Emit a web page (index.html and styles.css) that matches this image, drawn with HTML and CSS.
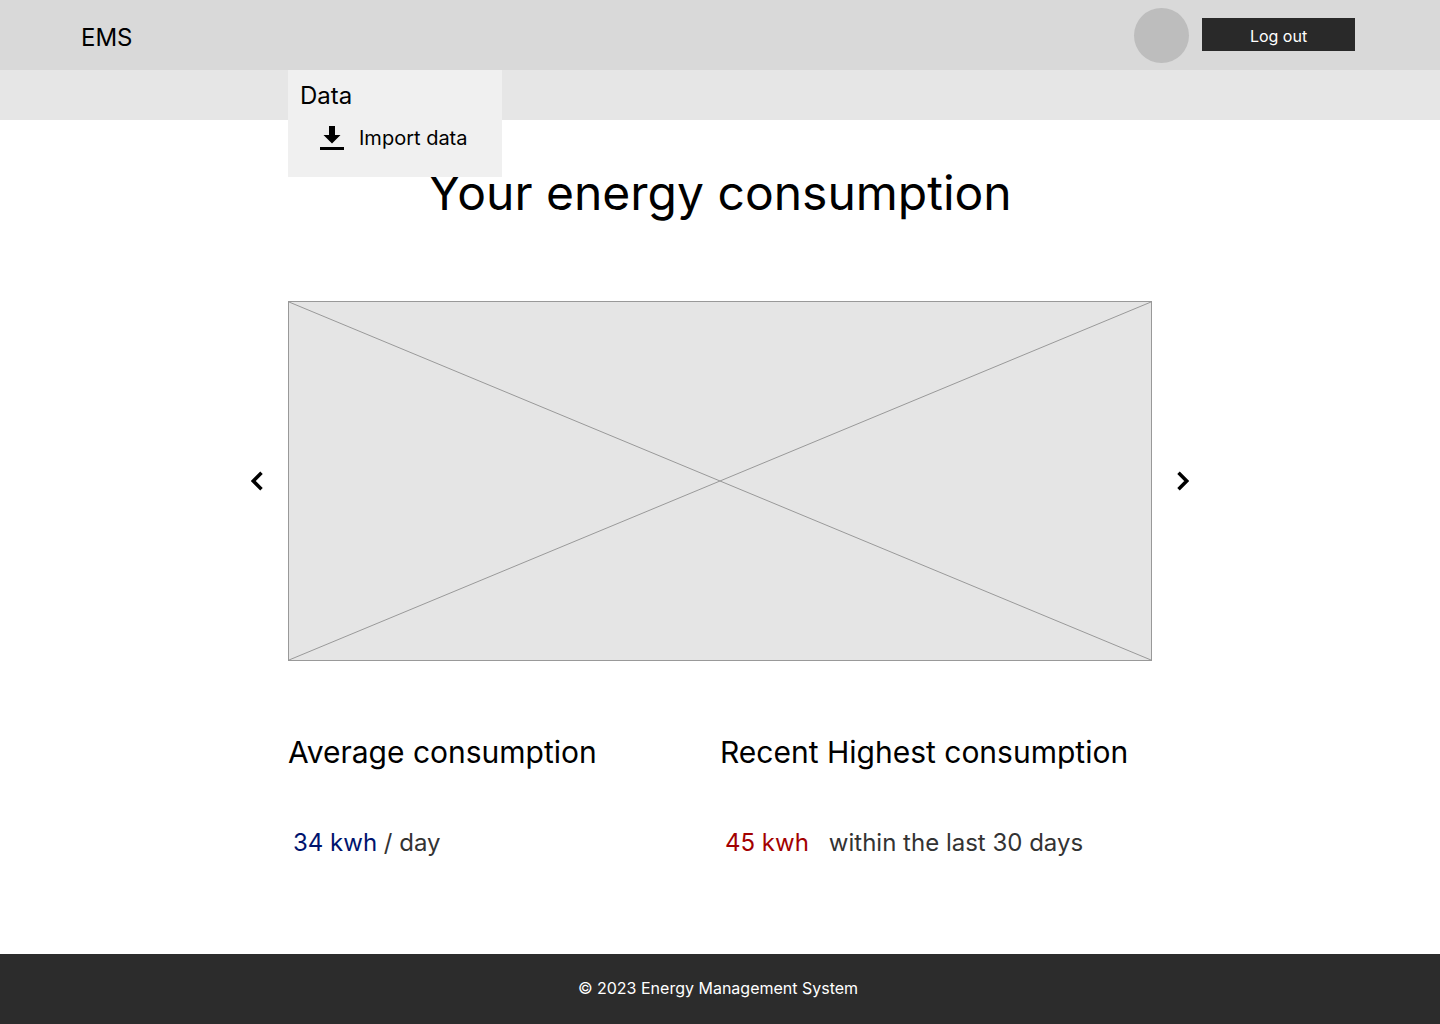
FILE: index.html
```html
<!DOCTYPE html>
<html lang="en">
<head>
  <meta charset="utf-8">
  <meta name="viewport" content="width=device-width, initial-scale=1">
  <title>EMS – Your energy consumption</title>
  <link rel="stylesheet" href="styles.css">
</head>
<body>
  <header class="topbar">
    <a class="brand" href="#">EMS</a>
    <div class="account">
      <span class="avatar"></span>
      <button class="logout" type="button">Log out</button>
    </div>
  </header>
  <nav class="subnav" aria-label="Main">
    <div class="menu">
      <p class="menu-title">Data</p>
      <a class="menu-item" href="#">
        <svg class="menu-icon" viewBox="0 0 24 24" aria-hidden="true"><path d="M9 0h6v9h5.500L12 17.600 3.500 9H9zM0 21h24v3H0z"/></svg>
        Import data
      </a>
    </div>
  </nav>
  <main class="content">
    <h1 class="title">Your energy consumption</h1>
    <section class="carousel" aria-label="Consumption charts">
      <button class="arrow" type="button" aria-label="Previous">
        <svg class="arrow-icon" viewBox="0 0 12 20" aria-hidden="true"><path d="M10.500 1.800 2.300 10l8.200 8.200"/></svg>
      </button>
      <svg class="chart" preserveAspectRatio="none" aria-hidden="true">
        <line x1="0" y1="0" x2="100%" y2="100%"/>
        <line x1="100%" y1="0" x2="0" y2="100%"/>
      </svg>
      <button class="arrow" type="button" aria-label="Next">
        <svg class="arrow-icon" viewBox="0 0 12 20" aria-hidden="true"><path d="M1.500 1.800 9.700 10l-8.200 8.200"/></svg>
      </button>
    </section>
    <div class="stats">
      <section class="stat">
        <h2 class="stat-title">Average consumption</h2>
        <p class="stat-text"><span class="average">34 kwh</span> / day</p>
      </section>
      <section class="stat">
        <h2 class="stat-title">Recent Highest consumption</h2>
        <p class="stat-text"><span class="highest">45 kwh</span>within the last 30 days</p>
      </section>
    </div>
  </main>
  <footer class="footer">© 2023 Energy Management System</footer>
</body>
</html>
```
FILE: styles.css
```css
* { box-sizing: border-box; }

body {
  margin: 0;
  min-height: 100vh;
  display: flex;
  flex-direction: column;
  background: #fff;
  color: #000;
  font-family: Inter, "Liberation Sans", sans-serif;
}

h1, h2, p { margin: 0; font-weight: 400; }
a { color: inherit; text-decoration: none; }
button { border: 0; padding: 0; font: inherit; cursor: pointer; }

.topbar {
  height: 70px;
  padding: 0 85px 0 81px;
  display: flex;
  align-items: center;
  justify-content: space-between;
  background: #d9d9d9;
}
.brand { padding-top: 5px; font-size: 24px; line-height: 30px; }
.account { display: flex; align-items: center; gap: 13px; }
.avatar { width: 55px; height: 55px; border-radius: 50%; background: #bdbdbd; }
.logout {
  width: 153px;
  height: 33px;
  margin-bottom: 2px;
  padding-top: 4px;
  background: #292929;
  color: #fff;
  font-size: 16px;
  line-height: 20px;
}

.subnav { position: relative; height: 50px; background: #e6e6e6; }
.menu {
  position: absolute;
  top: 0;
  left: 20%;
  width: 214px;
  height: 107px;
  padding: 11px 12px;
  background: #f0f0f0;
}
.menu-title { font-size: 24px; line-height: 30px; }
.menu-item {
  display: flex;
  align-items: center;
  gap: 15px;
  padding: 15px 0 0 20px;
  font-size: 20px;
  line-height: 24px;
}
.menu-icon { width: 24px; height: 24px; }

.content { flex: 1; padding: 43px 0 79px; }
.title { font-size: 48px; line-height: 60px; text-align: center; }
.carousel {
  display: flex;
  align-items: center;
  justify-content: center;
  gap: 19px;
  margin-top: 78px;
}
.arrow { display: flex; padding: 6px; background: none; }
.arrow-icon {
  width: 12px;
  height: 20px;
  fill: none;
  stroke: #000;
  stroke-width: 3.5;
}
.chart {
  width: 60%;
  height: 360px;
  border: 1px solid #999;
  background: #e5e5e5;
  stroke: #999;
}
.stats {
  width: 60%;
  margin: 72px auto 0;
  display: grid;
  grid-template-columns: 1fr 1fr;
}
.stat-title { font-size: 30px; line-height: 38px; }
.stat-text { padding: 57px 0 0 5px; font-size: 24px; line-height: 30px; color: #333; }
.average { color: #00146e; }
.highest { margin-right: 20px; color: #a30000; }

.footer {
  padding: 24px 4px 26px 0;
  background: #2c2c2c;
  color: #fff;
  font-size: 16px;
  line-height: 20px;
  text-align: center;
}
```
